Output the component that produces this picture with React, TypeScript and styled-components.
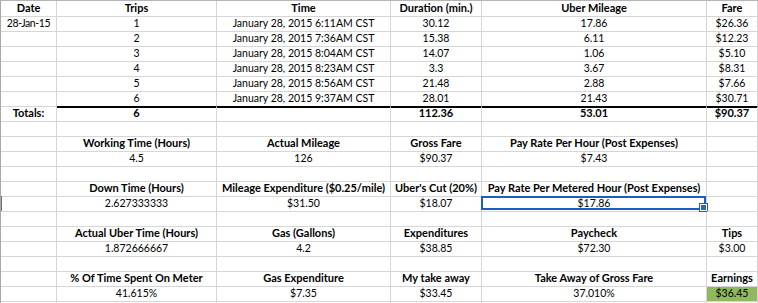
import React from "react";
import styled, { createGlobalStyle } from "styled-components";

const Global = createGlobalStyle`
  html, body { margin: 0; padding: 0; background: #fff; overflow: hidden; }
  body { font-family: Lato, "Open Sans", sans-serif; color: #000; }
`;

const Sheet = styled.div`
  width: 758px;
  height: 303px;
  overflow: hidden;
  box-sizing: border-box;
  border-top: 1px solid #b4b4b4;
  border-left: 1px solid #a8a8a8;
  display: flex;
  flex-direction: column;
`;

const Row = styled.div<{ $h: number }>`
  display: grid;
  grid-template-columns: 56px 160px 174px 91px 225px 51px;
  height: ${(p) => p.$h}px;
  flex: 0 0 auto;
`;

const Cell = styled.div<{ $bold?: boolean; $rule?: boolean; $fill?: string; $tight?: boolean }>`
  position: relative;
  box-sizing: border-box;
  border-right: 1px solid #d6d6d6;
  border-bottom: 1px solid ${(p) => (p.$rule ? "#000" : "#d6d6d6")};
  box-shadow: ${(p) => (p.$rule ? "0 1px 0 #000" : "none")};
  background: ${(p) => p.$fill ?? "transparent"};
  display: flex;
  align-items: flex-end;
  justify-content: center;
  padding-bottom: 2px;
  font-size: ${(p) => (p.$bold ? "11px" : "10.5px")};
  letter-spacing: ${(p) => (p.$tight ? "-0.4px" : "0")};
  line-height: 12px;
  font-weight: ${(p) => (p.$bold ? 700 : 400)};
  white-space: nowrap;
  overflow: visible;
`;

const Selection = styled.span`
  position: absolute;
  top: -1px;
  left: -1px;
  right: 0;
  bottom: 1px;
  border: 2px solid #1d5bc6;
  pointer-events: none;
`;

const Handle = styled.span`
  position: absolute;
  right: -3px;
  bottom: -3px;
  width: 5px;
  height: 5px;
  background: #2a66cc;
  border: 1px solid #fff;
  outline: 1px solid #1d5bc6;
`;

const RowMark = styled.span`
  position: absolute;
  left: -1px;
  top: -1px;
  bottom: 0;
  width: 2px;
  background: #6f6f6f;
`;

type C = { t?: string; b?: boolean; rule?: boolean; fill?: string; sel?: boolean; mark?: boolean; tight?: boolean };

const B = (t: string): C => ({ t, b: true });
const N = (t: string): C => ({ t });
const E: C = {};

const trips: [string, string, string, string, string, string][] = [
  ["28-Jan-15", "1", "January 28, 2015 6:11AM CST", "30.12", "17.86", "$26.36"],
  ["", "2", "January 28, 2015 7:36AM CST", "15.38", "6.11", "$12.23"],
  ["", "3", "January 28, 2015 8:04AM CST", "14.07", "1.06", "$5.10"],
  ["", "4", "January 28, 2015 8:23AM CST", "3.3", "3.67", "$8.31"],
  ["", "5", "January 28, 2015 8:56AM CST", "21.48", "2.88", "$7.66"],
  ["", "6", "January 28, 2015 9:37AM CST", "28.01", "21.43", "$30.71"],
];

const rows: C[][] = [
  [B("Date"), B("Trips"), B("Time"), B("Duration (min.)"), B("Uber Mileage"), B("Fare")],
  ...trips.map((r, i) =>
    r.map((t, j) => ({ t, rule: i === 5 && j > 0, tight: i === 0 && j === 0 }))
  ),
  [B("Totals:"), B("6"), E, B("112.36"), B("53.01"), B("$90.37")],
  [E, E, E, E, E, E],
  [E, B("Working Time (Hours)"), B("Actual Mileage"), B("Gross Fare"), B("Pay Rate Per Hour (Post Expenses)"), E],
  [E, N("4.5"), N("126"), N("$90.37"), N("$7.43"), E],
  [E, E, E, E, E, E],
  [E, B("Down Time (Hours)"), B("Mileage Expenditure ($0.25/mile)"), B("Uber's Cut (20%)"), B("Pay Rate Per Metered Hour (Post Expenses)"), E],
  [{ mark: true }, N("2.627333333"), N("$31.50"), N("$18.07"), { t: "$17.86", sel: true }, E],
  [E, E, E, E, E, E],
  [E, B("Actual Uber Time (Hours)"), B("Gas (Gallons)"), B("Expenditures"), B("Paycheck"), B("Tips")],
  [E, N("1.872666667"), N("4.2"), N("$38.85"), N("$72.30"), N("$3.00")],
  [E, E, E, E, E, E],
  [E, B("% Of Time Spent On Meter"), B("Gas Expenditure"), B("My take away"), B("Take Away of Gross Fare"), B("Earnings")],
  [E, N("41.615%"), N("$7.35"), N("$33.45"), N("37.010%"), { t: "$36.45", fill: "#90b85d" }],
  [E, E, E, E, E, E],
];

export default function App() {
  return (
    <>
      <Global />
      <Sheet>
        {rows.map((r, i) => (
          <Row key={i} $h={i === 0 ? 16 : 15}>
            {r.map((c, j) => (
              <Cell key={j} $bold={c.b} $rule={c.rule} $fill={c.fill} $tight={c.tight}>
                {c.t}
                {c.sel && (
                  <Selection>
                    <Handle />
                  </Selection>
                )}
                {c.mark && <RowMark />}
              </Cell>
            ))}
          </Row>
        ))}
      </Sheet>
    </>
  );
}
